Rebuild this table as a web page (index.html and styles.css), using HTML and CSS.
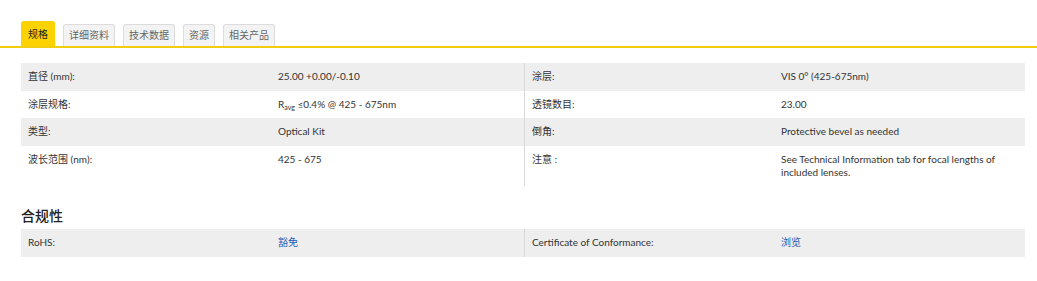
FILE: index.html
```html
<!DOCTYPE html>
<html lang="zh">
<head>
<meta charset="utf-8">
<title>规格</title>
<link rel="stylesheet" href="styles.css">
</head>
<body>
<div class="tabbar">
  <ul class="tabs">
    <li class="tab active">规格</li>
    <li class="tab">详细资料</li>
    <li class="tab">技术数据</li>
    <li class="tab">资源</li>
    <li class="tab">相关产品</li>
  </ul>
</div>
<div class="content">
  <div class="specs">
    <div class="row shade">
      <div class="cell">直径 (mm):</div>
      <div class="cell">25.00 +0.00/-0.10</div>
      <div class="cell right">涂层:</div>
      <div class="cell">VIS 0° (425-675nm)</div>
    </div>
    <div class="row">
      <div class="cell">涂层规格:</div>
      <div class="cell">R<sub>avg</sub> ≤0.4% @ 425 - 675nm</div>
      <div class="cell right">透镜数目:</div>
      <div class="cell">23.00</div>
    </div>
    <div class="row shade">
      <div class="cell">类型:</div>
      <div class="cell">Optical Kit</div>
      <div class="cell right">倒角:</div>
      <div class="cell">Protective bevel as needed</div>
    </div>
    <div class="row">
      <div class="cell">波长范围 (nm):</div>
      <div class="cell">425 - 675</div>
      <div class="cell right">注意 :</div>
      <div class="cell">See Technical Information tab for focal lengths of included lenses.</div>
    </div>
  </div>
  <h2 class="heading">合规性</h2>
  <div class="specs">
    <div class="row shade">
      <div class="cell">RoHS:</div>
      <div class="cell"><a class="link" href="#">豁免</a></div>
      <div class="cell right">Certificate of Conformance:</div>
      <div class="cell"><a class="link" href="#">浏览</a></div>
    </div>
  </div>
</div>
</body>
</html>
```

FILE: styles.css
```css
html, body {
  margin: 0;
  padding: 0;
  background: #ffffff;
}
body {
  font-family: Lato, "Noto Sans CJK SC", sans-serif;
  font-size: 10px;
  color: #333333;
}
.tabbar {
  border-bottom: 2px solid #f3cd10;
  padding: 21px 0 0 21px;
}
.tabs {
  list-style: none;
  margin: 0;
  padding: 0;
  display: flex;
  align-items: flex-end;
  gap: 8px;
  height: 25px;
}
.tab {
  box-sizing: border-box;
  height: 22px;
  padding: 0 5px;
  line-height: 20px;
  background: #f3f3f3;
  border: 1px solid #dcdcdc;
  border-bottom: none;
  border-radius: 3px 3px 0 0;
  color: #666666;
  font-family: "Noto Sans CJK SC", sans-serif;
}
.tab.active {
  height: 25px;
  padding: 0 6px;
  line-height: 24px;
  background: #fcd200;
  border-color: #fcd200;
  color: #222222;
}
.content {
  padding: 15px 12px 0 21px;
}
.specs {
  display: flex;
  flex-direction: column;
}
.row {
  display: grid;
  grid-template-columns: 250px 253px 250px 1fr;
}
.row.shade {
  background: #eeeeee;
}
.cell {
  padding: 7px 7px 7.5px 7px;
  line-height: 13px;
}
.cell.right {
  border-left: 1px solid #d8d8d8;
}
sub {
  font-size: 7px;
  line-height: 0;
  vertical-align: -2px;
}
.heading {
  margin: 19px 0 4px 0;
  font-size: 14px;
  line-height: 20px;
  font-weight: 500;
  color: #222222;
  font-family: "Noto Sans CJK SC", sans-serif;
}
.link {
  color: #1f5bb5;
  text-decoration: none;
}
```
